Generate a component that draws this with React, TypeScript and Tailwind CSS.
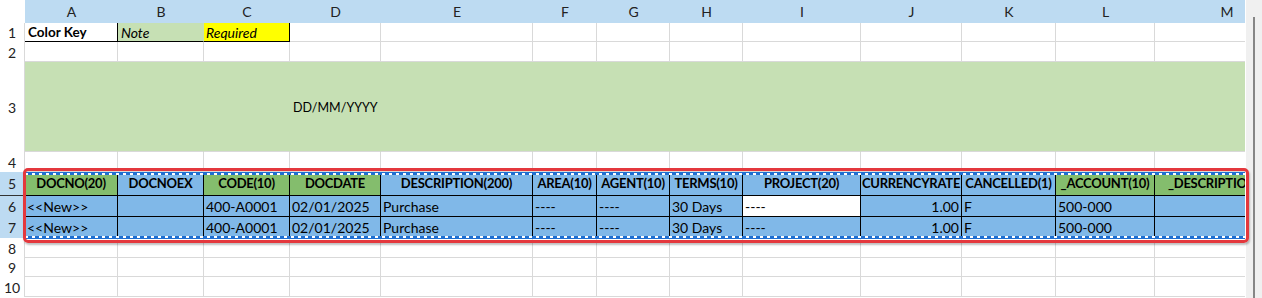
import type { ReactNode } from 'react';

const COLUMNS = ['A', 'B', 'C', 'D', 'E', 'F', 'G', 'H', 'I', 'J', 'K', 'L', 'M'];

const cellBase = 'flex items-center overflow-hidden whitespace-nowrap border-r border-b';
const plain = 'border-[#d9d9d9] bg-white';
const green3 = 'border-b-[#d9d9d9] border-r-[#c6e0b4] bg-[#c6e0b4]';
const headGreen =
  'border-black bg-[#84bd6d] justify-center pt-[1px] text-[13px] font-bold tracking-[-0.25px]';
const headBlue =
  'border-black bg-[#80b8e8] justify-center pt-[1px] text-[13px] font-bold tracking-[-0.25px]';
const dataBlue = 'border-black bg-[#80b8e8] pl-[2px] pt-[1px]';
const dataWhite = 'border-black bg-white pl-[2px] pt-[1px]';

type Cell = { text?: string; cls: string };

const blank = (): Cell[] => COLUMNS.map(() => ({ cls: plain }));

const headerRow: Cell[] = [
  { text: 'DOCNO(20)', cls: headGreen },
  { text: 'DOCNOEX', cls: headBlue },
  { text: 'CODE(10)', cls: headGreen },
  { text: 'DOCDATE', cls: headGreen },
  { text: 'DESCRIPTION(200)', cls: headBlue },
  { text: 'AREA(10)', cls: headBlue },
  { text: 'AGENT(10)', cls: headBlue },
  { text: 'TERMS(10)', cls: headBlue },
  { text: 'PROJECT(20)', cls: headBlue },
  { text: 'CURRENCYRATE', cls: headBlue },
  { text: 'CANCELLED(1)', cls: headBlue },
  { text: '_ACCOUNT(10)', cls: headGreen },
  { text: '_DESCRIPTION(200)', cls: headGreen },
];

function dataRow(activeProject: boolean): Cell[] {
  return [
    { text: '<<New>>', cls: dataBlue },
    { cls: dataBlue },
    { text: '400-A0001', cls: dataBlue },
    { text: '02/01/2025', cls: dataBlue },
    { text: 'Purchase', cls: dataBlue },
    { text: '----', cls: dataBlue },
    { text: '----', cls: dataBlue },
    { text: '30 Days', cls: dataBlue },
    { text: '----', cls: activeProject ? dataWhite : dataBlue },
    { text: '1.00', cls: `${dataBlue} justify-end pr-[2px]` },
    { text: 'F', cls: dataBlue },
    { text: '500-000', cls: dataBlue },
    { cls: dataBlue },
  ];
}

const rows: { n: number; selected?: boolean; frozen?: boolean; cells: Cell[] }[] = [
  {
    n: 1,
    cells: [
      { text: 'Color Key', cls: 'border-black bg-white pl-[3px] text-[13.5px] font-bold' },
      { text: 'Note', cls: 'border-b-black border-r-[#c6e0b4] bg-[#c6e0b4] pl-[3px] italic' },
      { text: 'Required', cls: 'border-black bg-[#ffff00] pl-[2px] italic' },
      ...blank().slice(3),
    ],
  },
  { n: 2, cells: blank() },
  {
    n: 3,
    cells: COLUMNS.map((c) =>
      c === 'D'
        ? { text: 'DD/MM/YYYY', cls: `${green3} pl-[3px] pt-[4px] text-[12.5px]` }
        : { cls: green3 },
    ),
  },
  { n: 4, cells: blank() },
  { n: 5, selected: true, frozen: true, cells: headerRow },
  { n: 6, selected: true, cells: dataRow(true) },
  { n: 7, selected: true, cells: dataRow(false) },
  { n: 8, cells: blank() },
  { n: 9, cells: blank() },
  { n: 10, cells: blank() },
];

function RowHeader({ n, selected, frozen }: { n: number; selected?: boolean; frozen?: boolean }) {
  return (
    <div
      className={`flex items-center justify-center border-r border-[#d9d9d9] text-[#222] ${
        selected ? 'bg-[#bddbf2]' : 'bg-white'
      } ${frozen ? 'border-b border-b-[#333]' : ''}`}
    >
      {n}
    </div>
  );
}

function Sheet() {
  const body: ReactNode[] = [];
  rows.forEach((row) => {
    body.push(<RowHeader key={`h${row.n}`} n={row.n} selected={row.selected} frozen={row.frozen} />);
    row.cells.forEach((cell, i) => {
      body.push(
        <div key={`${row.n}${COLUMNS[i]}`} className={`${cellBase} ${cell.cls}`}>
          {cell.text}
        </div>,
      );
    });
  });

  return (
    <div className="grid w-[1245px] shrink-0 grid-cols-[25px_93px_86px_86px_91px_152px_64px_73px_73px_118px_101px_94px_99px_144px] grid-rows-[23px_19px_20px_90px_20px_24px_21px_21px_20px_19px_20px] overflow-hidden">
      <div className="bg-white" />
      {COLUMNS.map((c) => (
        <div key={c} className="flex items-center justify-center bg-[#bddbf2] text-[#222]">
          {c}
        </div>
      ))}
      {body}
    </div>
  );
}

export default function App() {
  return (
    <div className="relative flex h-[298px] w-[1262px] overflow-hidden bg-white font-['Lato',sans-serif] text-[14px] text-black">
      <Sheet />

      {/* vertical scrollbar */}
      <div className="flex flex-1 justify-center border-l border-white bg-[#f0f0f0] pt-[17px]">
        <div className="w-[2px] bg-[#868686]" />
      </div>

      {/* copy marquee around rows 5-7 */}
      <div className="pointer-events-none absolute left-[25px] top-[172px] h-[3px] w-[1220px] border-t border-[#1f6fd1] bg-[image:repeating-linear-gradient(90deg,#ffffff_0_3px,#1f6fd1_3px_7px)]" />
      <div className="pointer-events-none absolute left-[25px] top-[236px] h-[3px] w-[1220px] border-b border-[#1f6fd1] bg-[image:repeating-linear-gradient(90deg,#ffffff_0_3px,#1f6fd1_3px_7px)]" />

      {/* highlight frame */}
      <div className="pointer-events-none absolute left-[23px] top-[168px] h-[75px] w-[1226px] rounded-[5px] border-[3px] border-[#e4383d] shadow-[1px_2px_2px_rgba(0,0,0,0.25)]" />
    </div>
  );
}
